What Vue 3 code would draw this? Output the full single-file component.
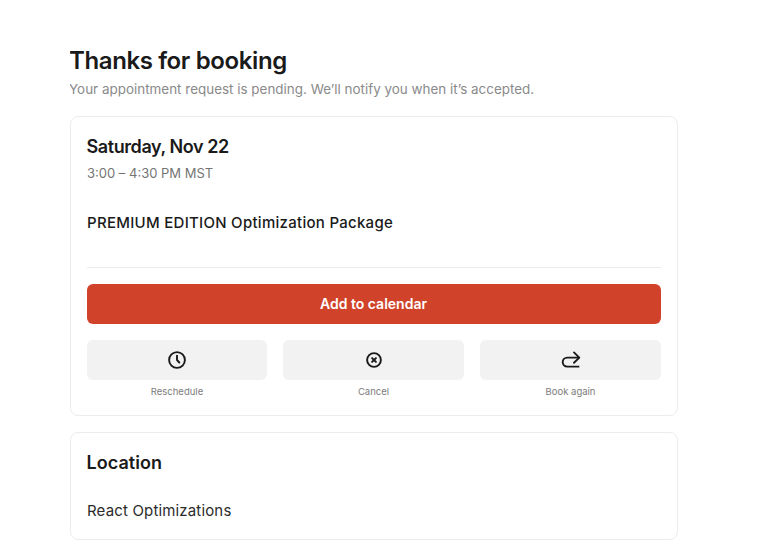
<script setup>
const actions = [
  { label: 'Reschedule', icon: 'clock' },
  { label: 'Cancel', icon: 'x' },
  { label: 'Book again', icon: 'redo' }
]
</script>

<template>
  <main class="page">
    <div class="intro">
      <h1 class="title">Thanks for booking</h1>
      <p class="subtitle">Your appointment request is pending. We’ll notify you when it’s accepted.</p>
    </div>
    <section class="card booking">
      <h2 class="date">Saturday, Nov 22</h2>
      <p class="time">3:00 – 4:30 PM MST</p>
      <p class="service">PREMIUM EDITION Optimization Package</p>
      <hr class="divider" />
      <button class="primary">Add to calendar</button>
      <div class="actions">
        <div v-for="a in actions" :key="a.label" class="action">
          <button class="action-btn" :aria-label="a.label">
            <svg width="20" height="20" viewBox="0 0 20 20" fill="none" stroke="#1a1a1a" stroke-width="1.9" stroke-linecap="round" stroke-linejoin="round">
              <template v-if="a.icon === 'clock'">
                <circle cx="10" cy="10" r="7.9" />
                <path d="M10 5.6V10l2.3 2.5" />
              </template>
              <template v-else-if="a.icon === 'x'">
                <circle cx="10" cy="10" r="6.9" />
                <path d="M8.1 8.1l3.8 3.8M11.9 8.1l-3.8 3.8" stroke-width="2" />
              </template>
              <template v-else>
                <path d="M18.3 7.6H6.2a4.5 4.5 0 0 0 0 9H18.3" stroke-linecap="butt" />
                <path d="M13 2.4L18.3 7.6l-5.3 5.2" />
              </template>
            </svg>
          </button>
          <span class="action-label">{{ a.label }}</span>
        </div>
      </div>
    </section>
    <section class="card location">
      <h2 class="loc-title">Location</h2>
      <p class="loc-name">React Optimizations</p>
    </section>
  </main>
</template>

<style scoped>
.page {
  width: 608px;
  margin-left: 70px;
  padding-top: 45px;
  font-family: Inter, "Liberation Sans", sans-serif;
  color: #1a1a1a;
  height: 503px;
  overflow: hidden;
}
.intro {
  margin-left: -1px;
}
.title {
  margin: 0;
  font-size: 24px;
  line-height: 32px;
  font-weight: 600;
  letter-spacing: -0.38px;
}
.subtitle {
  margin: 4px 0 0;
  font-size: 13.45px;
  line-height: 16px;
  color: #8a8a8a;
}
.card {
  box-sizing: border-box;
  background: #fff;
  border: 1px solid #ececec;
  border-radius: 8px;
  padding: 0 16px;
}
.booking {
  margin-top: 19px;
  height: 300px;
  padding-top: 19px;
}
.date {
  margin: 0 0 0 -0.5px;
  font-size: 18px;
  line-height: 22px;
  font-weight: 600;
  letter-spacing: -0.42px;
}
.time {
  margin: 7px 0 0;
  font-size: 13px;
  line-height: 17px;
  color: #757575;
}
.service {
  margin: 32px 0 0;
  font-size: 15px;
  line-height: 18px;
  font-weight: 500;
  letter-spacing: 0.28px;
}
.divider {
  margin: 35px 0 0;
  border: 0;
  border-top: 1px solid #ececec;
}
.primary {
  display: block;
  width: 100%;
  height: 40px;
  margin-top: 16px;
  padding: 0 1px 1px 0;
  border: 0;
  border-radius: 6px;
  background: #d0432a;
  color: #fff;
  font: 600 14px Inter, "Liberation Sans", sans-serif;
}
.actions {
  display: grid;
  grid-template-columns: 180fr 181fr 181fr;
  gap: 16px;
  margin-top: 16px;
}
.action {
  display: flex;
  flex-direction: column;
  align-items: center;
}
.action-btn {
  display: flex;
  align-items: center;
  justify-content: center;
  width: 100%;
  height: 40px;
  padding: 0;
  border: 0;
  border-radius: 6px;
  background: #f2f2f2;
}
.action-label {
  margin-top: 6px;
  font-size: 9.5px;
  line-height: 12px;
  color: #7c7c7c;
}
.location {
  margin-top: 16px;
  height: 108px;
  padding-top: 19px;
}
.loc-title {
  margin: 0 0 0 -0.5px;
  font-size: 18px;
  line-height: 22px;
  font-weight: 600;
  letter-spacing: 0.05px;
}
.loc-name {
  margin: 28px 0 0;
  font-size: 15px;
  line-height: 18px;
  color: #2b2b2b;
  letter-spacing: 0.16px;
}
</style>

<style>
html, body { background: #fff; }
</style>
